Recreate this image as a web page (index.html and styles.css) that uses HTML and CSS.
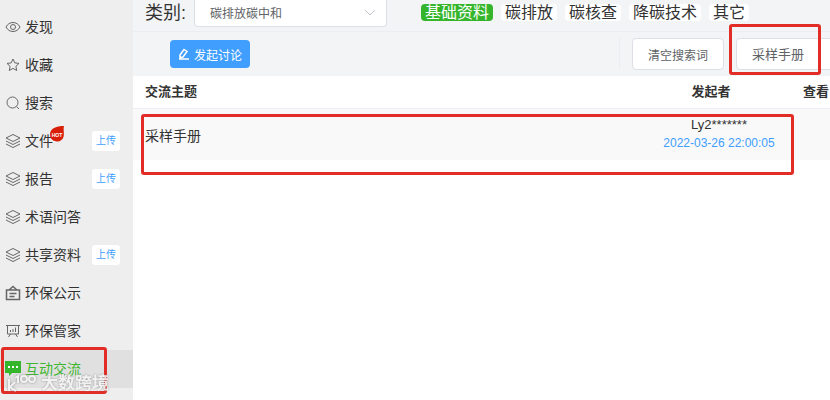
FILE: index.html
```html
<!DOCTYPE html>
<html lang="zh-CN">
<head>
<meta charset="utf-8">
<title>互动交流</title>
<link rel="stylesheet" href="styles.css">
</head>
<body>
<svg class="defs" aria-hidden="true">
  <symbol id="layers" viewBox="0 0 16 16"><path d="M8 1.500 15 5 8 8.500 1 5Z M1 8l7 3.500L15 8 M1 11l7 3.500 7-3.500"/></symbol>
</svg>
<div class="app">
  <nav class="sidebar">
    <a class="item" href="#"><svg class="icon" viewBox="0 0 16 16"><path d="M1 8C4 2 12 2 15 8 12 14 4 14 1 8Z"/><circle cx="8" cy="8" r="2.500"/></svg>发现</a>
    <a class="item" href="#"><svg class="icon" viewBox="0 0 16 16"><path d="m8 2 1.800 3.900 4.200.5-3.100 2.900.8 4.200L8 11.400l-3.700 2.100.8-4.200L2 6.400l4.200-.5Z"/></svg>收藏</a>
    <a class="item" href="#"><svg class="icon" viewBox="0 0 16 16"><circle cx="7.500" cy="7.500" r="5.500"/><path d="m11.500 11.500 2.500 2.500"/></svg>搜索</a>
    <div class="item"><a class="link" href="#"><svg class="icon" viewBox="0 0 16 16"><use href="#layers"/></svg>文件<svg class="hot" viewBox="0 0 15 16"><path d="M14 0C9 0 0 1 0 8.500a7 7 0 0 0 13.500 2.500C14.500 7 13 4 14 0Z"/><text x="7" y="10.500">HOT</text></svg></a><button class="upload">上传</button></div>
    <div class="item"><a class="link" href="#"><svg class="icon" viewBox="0 0 16 16"><use href="#layers"/></svg>报告</a><button class="upload">上传</button></div>
    <a class="item" href="#"><svg class="icon" viewBox="0 0 16 16"><use href="#layers"/></svg>术语问答</a>
    <div class="item"><a class="link" href="#"><svg class="icon" viewBox="0 0 16 16"><use href="#layers"/></svg>共享资料</a><button class="upload">上传</button></div>
    <a class="item" href="#"><svg class="icon heavy" viewBox="0 0 16 16"><path d="M1.500 5h13v9.500h-13Z M4 5l4-3.500L12 5 M4.500 8.500h7 M4.500 11.500h5"/></svg>环保公示</a>
    <a class="item" href="#"><svg class="icon" viewBox="0 0 16 16"><path d="M1 2.500h14 M2.500 2.500v8.500h11V2.500 M5.500 11l-2 3 M10.500 11l2 3 M5.500 7v2 M8 6v3 M10.500 4.500V9"/></svg>环保管家</a>
    <a class="item active" href="#"><svg class="icon" viewBox="0 0 16 16"><path class="bubble" d="M0 0h16v12H7l-3 3v-3H0Z"/><path class="dots" d="M3 5h2v2H3Z M7 5h2v2H7Z M11 5h2v2h-2Z"/></svg>互动交流</a>
  </nav>
  <main class="main">
    <div class="filters">
      <label class="label" for="category">类别:</label>
      <div class="picker">
        <select id="category"><option>碳排放碳中和</option></select>
        <svg class="chevron" viewBox="0 0 12 8"><path d="m1 1 5 5 5-5"/></svg>
      </div>
      <div class="tabs">
        <button class="tab selected">基础资料</button>
        <button class="tab">碳排放</button>
        <button class="tab">碳核查</button>
        <button class="tab">降碳技术</button>
        <button class="tab">其它</button>
      </div>
    </div>
    <div class="toolbar">
      <button class="primary"><svg viewBox="0 0 12 12"><path d="M2 7 6 1.500l3 2L5 9l-3 .5Z M1 11h10"/></svg>发起讨论</button>
      <div class="actions">
        <button class="plain">清空搜索词</button>
        <div class="group"><button class="plain manual">采样手册</button><button class="plain more" aria-label="更多"></button></div>
      </div>
    </div>
    <table class="topics">
      <thead><tr><th>交流主题</th><th class="author">发起者</th><th class="views">查看</th></tr></thead>
      <tbody><tr><td class="title">采样手册</td><td class="author"><div class="name">Ly2*******</div><time>2022-03-26 22:00:05</time></td><td></td></tr></tbody>
    </table>
  </main>
  <div class="mark mark-manual"></div>
  <div class="mark mark-row"></div>
  <div class="mark mark-nav"></div>
  <div class="watermark"><svg viewBox="0 0 32 20"><path d="M3 5v12 M9 8l-5 5 6 4 M9 4l3-2v7"/><circle cx="18" cy="5" r="3"/><circle cx="26" cy="5" r="3"/></svg>大数跨境</div>
</div>
</body>
</html>
```
FILE: styles.css
```css
* { box-sizing: border-box; }
body {
  margin: 0;
  font-family: "Liberation Sans", "Noto Sans CJK SC", sans-serif;
  font-size: 14px;
  color: #333;
  background: #fff;
}
button, select { font: inherit; color: inherit; border: 0; padding: 0; margin: 0; }
a { color: inherit; text-decoration: none; }
.defs { display: none; }
.app { position: relative; display: flex; min-height: 100vh; overflow: hidden; }

.sidebar { flex: 0 0 133px; padding: 8px 0; background: #eee; }
.item { display: flex; align-items: center; height: 38px; padding: 0 13px 2px 5px; }
.link { position: relative; display: flex; align-items: center; }
.icon { width: 16px; height: 16px; margin: 2px 4px 0 0; fill: none; stroke: #666; stroke-width: 1; }
.heavy { stroke-width: 1.5; }
.active { color: #3fb62f; background: #e0e0e0; }
.bubble { fill: #34b52c; stroke: none; }
.dots { fill: #fff; stroke: none; }
.upload { width: 28px; height: 20px; margin: 2px 0 0 auto; border-radius: 3px; background: #fff; color: #409eff; font-size: 10px; line-height: 20px; }
.hot { position: absolute; left: 45px; top: -4px; width: 15px; height: 16px; fill: #d81e06; }
.hot text { fill: #fff; stroke: none; font-size: 5px; font-weight: 700; text-anchor: middle; }

.main { flex: 1; min-width: 0; overflow: hidden; }
.filters { display: flex; align-items: flex-start; height: 32px; padding-left: 12px; background: #f3f4f6; border-bottom: 1px solid #ebedf0; }
.label { width: 49px; font-size: 18px; line-height: 26px; }
.picker { position: relative; width: 193px; }
.picker select { width: 100%; height: 27px; padding: 2px 15px 0; border: 1px solid #dcdfe6; border-top: 0; border-radius: 0 0 4px 4px; background: #fff; color: #606266; font-size: 12px; appearance: none; }
.chevron { position: absolute; right: 11px; top: 9px; width: 12px; height: 8px; fill: none; stroke: #c0c4cc; }
.tabs { display: flex; gap: 8px; margin: 4px 0 0 34px; }
.tab { height: 17px; padding: 0 4px; border-radius: 4px; background: #fff; font-size: 16px; line-height: 17px; white-space: nowrap; }
.selected { background: #34b52c; color: #fff; }

.toolbar { display: flex; align-items: center; justify-content: space-between; height: 44px; padding-left: 37px; background: #f3f4f6; }
.primary { display: flex; align-items: center; justify-content: center; gap: 4px; width: 80px; height: 28px; border-radius: 4px; background: #409eff; color: #fff; font-size: 12px; }
.primary svg { width: 12px; height: 12px; fill: none; stroke: #fff; stroke-width: 1.5; }
.actions { display: flex; gap: 12px; padding-left: 12px; border-left: 1px solid #ebedf0; }
.group { display: flex; }
.plain { height: 32px; padding: 0 15px; border: 1px solid #dcdfe6; border-radius: 4px; background: #fff; color: #606266; font-size: 12px; white-space: nowrap; }
.manual { padding-bottom: 2px; font-size: 13px; }
.more { width: 10px; padding: 0; border-right: 0; border-radius: 0; }

.topics { width: 100%; border-spacing: 0; table-layout: fixed; }
.topics th { height: 33px; padding: 0 12px; border-bottom: 1px solid #ebeef5; font-size: 13px; line-height: 20px; text-align: left; }
.topics tbody tr { background: #f9f9f9; }
.topics td { height: 51px; padding: 0 12px; }
.topics .author { width: 144px; padding: 0 32px 0 16px; text-align: center; }
.topics td.author { padding: 0; }
.topics .views { width: 39px; white-space: nowrap; overflow: hidden; }
.name { font-size: 13px; line-height: 16px; }
time { display: block; color: #409eff; font-size: 12px; line-height: 20px; }

.mark { position: absolute; border: 3px solid #e12d26; border-radius: 3px; pointer-events: none; }
.mark-manual { left: 729px; top: 24px; width: 92px; height: 51px; }
.mark-row { left: 141px; top: 114px; width: 653px; height: 61px; }
.mark-nav { left: 1px; top: 347px; width: 106px; height: 47px; }
.watermark { position: absolute; left: 6px; top: 374px; display: flex; align-items: center; gap: 3px; color: #f4f4f4; font-size: 17px; font-weight: 700; line-height: 20px; text-shadow: 0 0 2px #888; opacity: 0.9; }
.watermark svg { width: 32px; height: 20px; fill: none; stroke: #f4f4f4; stroke-width: 2; filter: drop-shadow(0 0 1px #888); }
```
